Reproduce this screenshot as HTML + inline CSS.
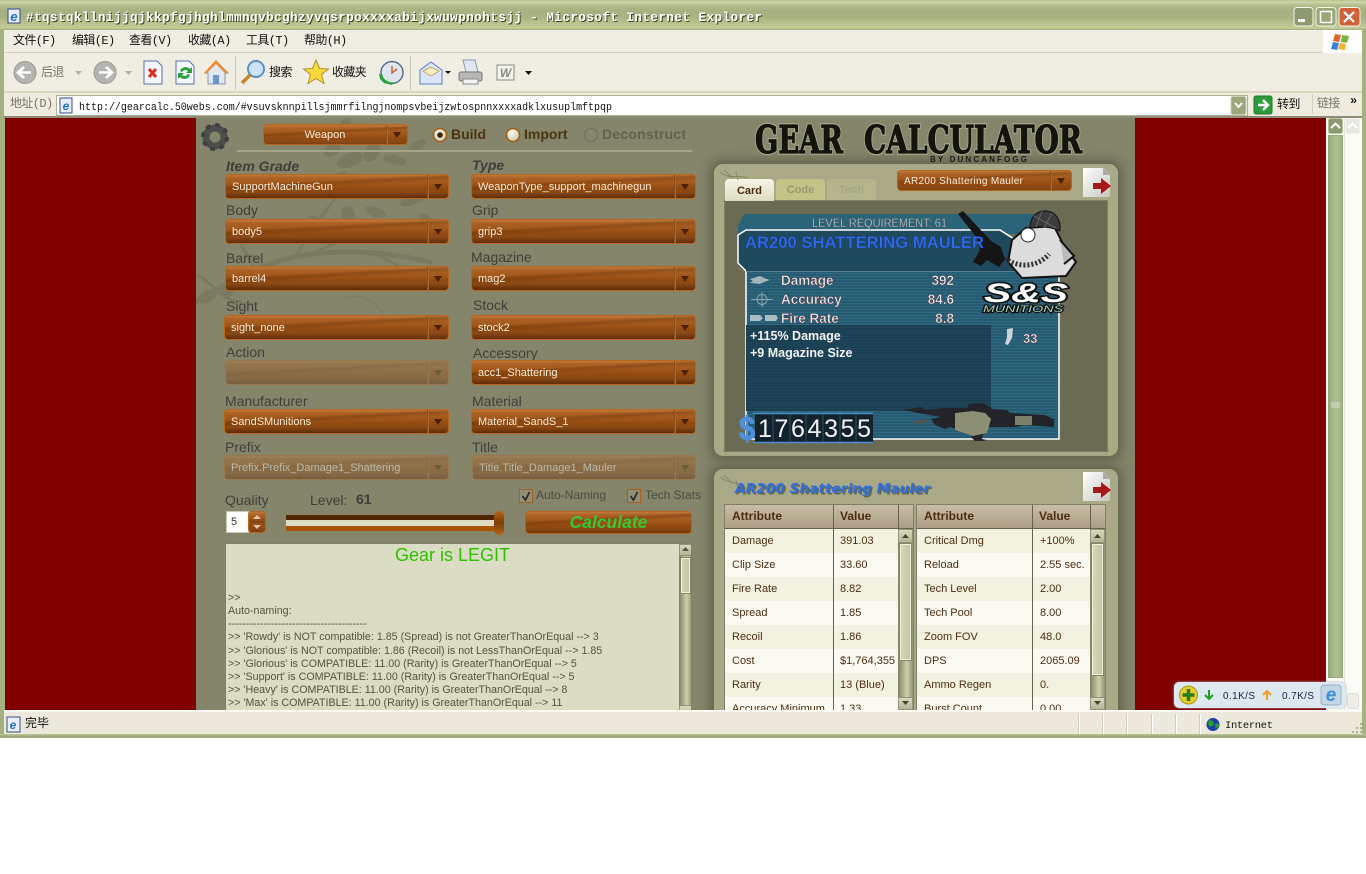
<!DOCTYPE html>
<html><head><meta charset="utf-8"><title>Gear Calculator</title>
<style>
html,body{margin:0;padding:0;background:#fff;width:1366px;height:874px;overflow:hidden}
div,span{position:absolute;box-sizing:border-box}
body{font-family:"Liberation Sans",Arial,sans-serif}
.cjk{font-family:"Liberation Mono","Noto Sans CJK SC",monospace;font-size:12px;color:#111;white-space:nowrap;line-height:14px;letter-spacing:-.6px}
.gr{color:#77776a}
.dd{height:25px;border-radius:4px;border:1px solid #b9651a;background:linear-gradient(177deg,rgba(0,0,0,0) 30%,rgba(80,36,0,.3) 38%,rgba(0,0,0,0) 50%),linear-gradient(#c07a3c 0,#ad6225 3px,#a4591c 8px,#91490f 14px,#8a4a16 17px,#6e360a 21px,#5e2c06 100%);color:#f6ecd6;font-size:11px;line-height:24px;padding-left:6px;white-space:nowrap;overflow:hidden}
.dd i{position:absolute;right:20px;top:0;bottom:0;width:1px;background:#8a4d1c;box-shadow:1px 0 0 #a9692f}
.dd b{position:absolute;right:6px;top:9px;width:0;height:0;border:4.5px solid transparent;border-top:6px solid #4a2200;border-bottom:0}
.off{opacity:.42}
.l{font-size:14px;line-height:16px;color:#3f3f3b;white-space:nowrap}
.row{left:0;width:100%;height:24px;font-size:11px;line-height:24px;color:#4d2c10;white-space:nowrap}
.row span{top:0}
.a{background:#f1f3e0}.b{background:#fafaf2}
.th{top:0;height:24px;font-size:12px;font-weight:bold;line-height:22px;color:#4d2c10;background:linear-gradient(#c9bda4,#ad9f86);border-bottom:1px solid #6a5f4a;padding-left:7px}
.log{left:2px;font-size:10.7px;line-height:12px;color:#57533f;white-space:nowrap}
.sb{background:linear-gradient(90deg,#7f8261,#cfd0ab 60%,#8f9270)}
.sbb{background:linear-gradient(#d8d9bc,#b4b596);border:1px solid #92937a}
.th2{background:linear-gradient(90deg,#d5d6b6,#c5c6a2);border:1px solid #eef0dc;box-shadow:0 0 0 1px #85866a}
.pn{background:#a9a987;border-radius:9px;box-shadow:0 0 10px 5px #66664f}
</style></head><body>

<!-- window chrome -->
<div style="left:0;top:0;width:1366px;height:738px;background:#a4b17e"></div>
<div style="left:0;top:0;width:1366px;height:30px;background:linear-gradient(#b7c38d 0,#cfd6ab 2px,#b4bf8e 5px,#a6b281 10px,#a7b382 17px,#bdc691 25px,#c4cc98 28px,#9dab78 30px)"></div>
<div style="left:4px;top:30px;width:1358px;height:23px;background:#f0eee3;border-bottom:1px solid #d8d5bf"></div>
<div style="left:4px;top:53px;width:1358px;height:40px;background:#f0eee2;border-bottom:2px solid #d9d6c0"></div>
<div style="left:4px;top:93px;width:1358px;height:23px;background:#efecdf"></div>
<div style="left:4px;top:116px;width:1358px;height:2px;background:#8c8c78"></div>
<div style="left:1323px;top:30px;width:39px;height:23px;background:#fff"></div>

<div class="cjk" style="left:13px;top:34px">文件(F)</div>
<div class="cjk" style="left:72px;top:34px">编辑(E)</div>
<div class="cjk" style="left:129px;top:34px">查看(V)</div>
<div class="cjk" style="left:188px;top:34px">收藏(A)</div>
<div class="cjk" style="left:246px;top:34px">工具(T)</div>
<div class="cjk" style="left:304px;top:34px">帮助(H)</div>
<div class="cjk gr" style="left:41px;top:66px">后退</div>
<div class="cjk" style="left:269px;top:66px">搜索</div>
<div class="cjk" style="left:332px;top:66px">收藏夹</div>
<div class="cjk gr" style="left:10px;top:97px">地址(D)</div>
<div class="cjk" style="left:1277px;top:98px">转到</div>
<div class="cjk gr" style="left:1317px;top:97px">链接</div>
<div class="cjk" style="left:1350px;top:94px;font-weight:bold">»</div>

<div style="left:56px;top:95px;width:1192px;height:21px;background:#fff;border:1px solid #a9b58a"></div>

<!-- content -->
<div style="left:5px;top:118px;width:1321px;height:592px;background:#800000"></div>
<div style="left:196px;top:118px;width:939px;height:592px;background:#85856b;overflow:hidden">
<svg style="position:absolute;left:0;top:0" width="510" height="592" viewBox="196 118 510 592">
<g fill="none" stroke="#7a7a61" stroke-linecap="round">
<path d="M190 305C225 285 255 265 295 257S380 250 430 262" stroke-width="5"/>
<path d="M295 257C310 232 330 205 352 175" stroke-width="3"/>
<path d="M320 250C360 232 395 222 430 226" stroke-width="2.5"/>
<path d="M255 268C245 252 240 240 230 232" stroke-width="2.5"/>
<path d="M372 252C398 265 415 278 428 272" stroke-width="2.5"/>
<path d="M198 275C212 282 220 300 240 302" stroke-width="3"/>
<path d="M340 300C360 290 380 300 395 335" stroke-width="1.500" opacity=".6"/>
</g>
<g fill="#7a7a61">
<ellipse cx="345" cy="128" rx="6" ry="10" transform="rotate(20 345 128)"/>
<ellipse cx="332" cy="150" rx="9" ry="6" transform="rotate(-30 332 150)"/>
<ellipse cx="350" cy="160" rx="14" ry="7" transform="rotate(-20 350 160)"/>
<ellipse cx="372" cy="152" rx="7" ry="11" transform="rotate(35 372 152)"/>
<ellipse cx="395" cy="160" rx="12" ry="5" transform="rotate(15 395 160)"/>
<ellipse cx="418" cy="145" rx="9" ry="4" transform="rotate(-25 418 145)"/>
<ellipse cx="340" cy="182" rx="8" ry="12" transform="rotate(30 340 182)"/>
<ellipse cx="366" cy="186" rx="13" ry="6" transform="rotate(-35 366 186)"/>
<ellipse cx="392" cy="185" rx="7" ry="10"/>
<ellipse cx="412" cy="200" rx="13" ry="5" transform="rotate(-20 412 200)"/>
<ellipse cx="375" cy="212" rx="11" ry="5" transform="rotate(20 375 212)"/>
<ellipse cx="348" cy="215" rx="7" ry="9" transform="rotate(-15 348 215)"/>
<ellipse cx="316" cy="222" rx="10" ry="5" transform="rotate(25 316 222)"/>
<ellipse cx="425" cy="218" rx="7" ry="4" transform="rotate(30 425 218)"/>
<ellipse cx="208" cy="296" rx="10" ry="6" transform="rotate(-30 208 296)"/>
<ellipse cx="228" cy="290" rx="6" ry="9" transform="rotate(20 228 290)"/>
</g></svg></div>
<div style="left:1326px;top:118px;width:36px;height:592px;background:#fcfcf6"></div>
<div style="left:1328px;top:135px;width:15px;height:543px;background:linear-gradient(90deg,#98ab7c,#b0bf96 50%,#a0b383);border:1px solid #93a876"></div>
<div style="left:1344px;top:118px;width:1px;height:592px;background:#e6e6d8"></div>

<!-- right panels -->
<div class="pn" style="left:714px;top:164px;width:404px;height:292px"></div>
<div style="left:724px;top:200px;width:384px;height:252px;background:#6b6b53;border:1px solid #7d7d65"></div>
<div class="pn" style="left:714px;top:469px;width:404px;height:250px"></div>
<div style="left:725px;top:179px;width:49px;height:22px;background:linear-gradient(#f6f6e8,#dedcc0);border-radius:4px 4px 0 0;text-align:center;font-size:11px;font-weight:bold;line-height:24px;color:#4a2e10">Card</div>
<div style="left:776px;top:179px;width:49px;height:21px;background:#c3c388;border-radius:4px 4px 0 0;text-align:center;font-size:11px;font-weight:bold;line-height:22px;color:#98986f">Code</div>
<div style="left:827px;top:179px;width:49px;height:21px;background:#b4b58a;border-radius:4px 4px 0 0;text-align:center;font-size:11px;font-weight:bold;line-height:22px;color:#a6a77f">Tech</div>

<!-- overlay art -->
<svg style="position:absolute;left:0;top:0" width="1366" height="874" viewBox="0 0 1366 874" font-family="Liberation Sans,Arial,sans-serif">
<defs>
<pattern id="st" width="3" height="3" patternUnits="userSpaceOnUse"><rect width="3" height="3" fill="#275b72"/><rect width="3" height="1" fill="#2e6780"/></pattern>
<pattern id="sd" width="3" height="3" patternUnits="userSpaceOnUse"><rect width="3" height="3" fill="#1c4053"/><rect width="3" height="1" fill="#204759"/></pattern>
<radialGradient id="rad" cx=".4" cy=".35" r=".7"><stop offset="0" stop-color="#fbfbf0"/><stop offset="1" stop-color="#c8c8ac"/></radialGradient>
<linearGradient id="doc" x1="0" y1="0" x2="1" y2="1"><stop offset="0" stop-color="#fff"/><stop offset="1" stop-color="#c4c8c0"/></linearGradient>
</defs>

<!-- title -->
<rect x="8" y="9" width="12" height="14" fill="#e8eefc" stroke="#3a4a8a"/>
<text x="14" y="21" text-anchor="middle" font-size="13" font-weight="bold" font-style="italic" fill="#1e6fd8">e</text>
<text x="26" y="21" textLength="736" lengthAdjust="spacing" font-family="Liberation Mono,monospace" font-weight="bold" font-size="12.5" fill="#3a4420" transform="translate(1 1)">#tqstqkllnijjqjkkpfgjhghlmmnqvbcghzyvqsrpoxxxxabijxwuwpnohtsjj - Microsoft Internet Explorer</text>
<text x="26" y="21" textLength="736" lengthAdjust="spacing" font-family="Liberation Mono,monospace" font-weight="bold" font-size="12.5" fill="#fff">#tqstqkllnijjqjkkpfgjhghlmmnqvbcghzyvqsrpoxxxxabijxwuwpnohtsjj - Microsoft Internet Explorer</text>
<rect x="1294" y="7.5" width="19" height="18.5" rx="3" fill="#8d9a70" stroke="#f2f4e4"/><rect x="1298" y="19" width="7" height="3" fill="#fff"/>
<rect x="1316" y="7.5" width="20" height="18.5" rx="3" fill="#98a67a" stroke="#f2f4e4"/><rect x="1320.5" y="11.5" width="11" height="11" fill="none" stroke="#fff" stroke-width="1.5"/>
<rect x="1339" y="7.5" width="21" height="18.5" rx="3" fill="#d0613a" stroke="#f2f4e4"/><path d="M1344 12l10 10M1354 12l-10 10" stroke="#fff" stroke-width="2.2"/>
<!-- flag -->
<path d="M1335 34l6 1-2 7-6-1z" fill="#e0672c"/><path d="M1342 35l7 1-2 7-6-1z" fill="#7cb23a"/><path d="M1333 42l6 1-2 7-6-1z" fill="#3b7fd9"/><path d="M1340 43l6 1-1 6-7-1z" fill="#efb72c"/>

<!-- toolbar -->
<circle cx="25" cy="72.5" r="11" fill="#b5b5b0" stroke="#9a9a96"/><path d="M31 72.5H19M24 67l-6 5.5 6 5.5" fill="none" stroke="#fff" stroke-width="2.6"/>
<path d="M75 71l7 0-3.5 4z" fill="#b0b0a8"/>
<circle cx="105" cy="72.5" r="11" fill="#b5b5b0" stroke="#9a9a96"/><path d="M99 72.5h12M106 67l6 5.5-6 5.5" fill="none" stroke="#fff" stroke-width="2.6"/>
<path d="M125 71l7 0-3.5 4z" fill="#b0b0a8"/>
<path d="M144 61h13l5 5v18h-18z" fill="#f4f7ff" stroke="#5a6fb0"/><path d="M149 69l7 8M156 69l-7 8" stroke="#e0301c" stroke-width="3"/>
<path d="M176 61h13l5 5v18h-18z" fill="#f4f7ff" stroke="#5a6fb0"/><path d="M180 71a6 6 0 0 1 10-2l2-2v6h-6l2-2a4 4 0 0 0-6 1z" fill="#28a038"/><path d="M190 75a6 6 0 0 1-10 2l-2 2v-6h6l-2 2a4 4 0 0 0 6-1z" fill="#28a038"/>
<path d="M205 73l11-12 12 12h-3v11h-17v-11z" fill="#dfe6f4" stroke="#8a98b8"/><path d="M204 73l12-13 12 13-2 1-10-10-10 10z" fill="#ee8a2c"/><rect x="213" y="75" width="6" height="9" fill="#6f94c8"/>
<rect x="235" y="56" width="1" height="34" fill="#c9c6b0"/>
<circle cx="256" cy="69" r="8" fill="#cfe4fa" stroke="#5c8fc8" stroke-width="2"/><path d="M250 75l-8 8" stroke="#c8862c" stroke-width="3.5"/>
<path d="M316 60l3.5 8.5 9 .5-7 5.5 2.5 9-8-5-8 5 2.5-9-7-5.5 9-.5z" fill="#fbd93a" stroke="#b0902c"/>
<circle cx="392" cy="72.5" r="11" fill="#dfe6ee" stroke="#5a7090" stroke-width="1.5"/><path d="M392 66v7l5-4" stroke="#d06030" stroke-width="1.5" fill="none"/><path d="M382 74a10 10 0 0 0 12 8l-2 3-8-2-4-4-1-5z" fill="#28a038"/>
<rect x="410" y="56" width="1" height="34" fill="#c9c6b0"/>
<path d="M420 70l11-8 11 8v14h-22z" fill="#dbe6fa" stroke="#5c7cc0"/><path d="M423 71l8-4 8 4-8 5z" fill="#fbeec6" stroke="#c8a860"/>
<path d="M445 71h6l-3 3z" fill="#111"/>
<path d="M463 60h12l3 12h-12z" fill="#dfe6f0" stroke="#8a98b0"/><rect x="459" y="72" width="23" height="9" rx="2" fill="#b8b8b4" stroke="#777"/><rect x="463" y="79" width="15" height="5" fill="#f4f4f4" stroke="#888"/>
<rect x="497" y="65" width="17" height="15" fill="#f4f4ee" stroke="#8a8a80"/><text x="505.5" y="77" text-anchor="middle" font-size="12" font-weight="bold" font-style="italic" fill="#8a8a86">W</text>
<path d="M525 71h7l-3.5 4z" fill="#111"/>
<!-- address -->
<rect x="60" y="98" width="12" height="15" fill="#e8eefc" stroke="#3a4a8a"/><text x="66" y="110" text-anchor="middle" font-size="12" font-weight="bold" font-style="italic" fill="#1e6fd8">e</text>
<text x="79" y="110" textLength="533" lengthAdjust="spacingAndGlyphs" font-family="Liberation Mono,monospace" font-size="11" fill="#111">http://gearcalc.50webs.com/#vsuvsknnpillsjmmrfilngjnompsvbeijzwtospnnxxxxadklxusuplmftpqp</text>
<rect x="1231" y="96.5" width="15" height="18" rx="2" fill="#9aa67c" stroke="#c8d0ac"/><path d="M1235 103l3.5 4 3.5-4" fill="none" stroke="#fff" stroke-width="2"/>
<rect x="1254" y="96" width="18" height="18" rx="2" fill="#2c9a3c" stroke="#1e7a2c"/><path d="M1258 105h9M1263 100l5 5-5 5" fill="none" stroke="#fff" stroke-width="2.4"/>
<rect x="1312" y="94" width="1" height="20" fill="#d5d2bc"/>

<!-- page scrollbars -->
<rect x="1328.5" y="118.5" width="14" height="15" rx="2" fill="#8c9a70" stroke="#b8c29c"/><path d="M1331 128l4.5-4.5 4.5 4.5" fill="none" stroke="#fff" stroke-width="2"/>
<rect x="1345.5" y="118.5" width="14" height="15" rx="2" fill="#e8e8e2" stroke="#f4f4ee"/><path d="M1348 128l4.5-4.5 4.5 4.5" fill="none" stroke="#fff" stroke-width="2"/>
<path d="M1331 403h9M1331 405h9M1331 407h9" stroke="#d8e2c4"/>
<rect x="1347.5" y="693.5" width="11" height="15" rx="2" fill="#eeeee8" stroke="#ddd"/>

<!-- gear -->
<circle cx="215" cy="137" r="9" fill="none" stroke="#4e4e4e" stroke-width="7"/>
<circle cx="215" cy="137" r="12" fill="none" stroke="#3e3e3e" stroke-width="4" stroke-dasharray="4.5 4.9"/>
<circle cx="215" cy="137" r="4" fill="#85856b"/>
<!-- radios -->
<circle cx="440" cy="135" r="6.5" fill="url(#rad)" stroke="#a55a12" stroke-width="1.5"/><circle cx="440" cy="135" r="2.8" fill="#3a2208"/>
<text x="451" y="139" font-size="14" font-weight="bold" fill="#4a3410">Build</text>
<circle cx="513" cy="135" r="6.5" fill="url(#rad)" stroke="#a55a12" stroke-width="1.5"/>
<text x="524" y="139" font-size="14" font-weight="bold" fill="#4a3410">Import</text>
<circle cx="591" cy="135" r="6.5" fill="#85856b" stroke="#74745c" stroke-width="1.5"/>
<text x="602" y="139" font-size="14" font-weight="bold" fill="#62624a" textLength="84">Deconstruct</text>
<rect x="237" y="150" width="455" height="2" fill="#a3a388"/>

<!-- logo -->
<g font-family="DejaVu Serif,Liberation Serif,serif" font-weight="bold" fill="#14140e" stroke="#a8a88c" stroke-width="3.5" paint-order="stroke">
<text x="755" y="153" font-size="38" textLength="88" lengthAdjust="spacingAndGlyphs">GEAR</text>
<text x="864" y="153" font-size="38" textLength="218" lengthAdjust="spacingAndGlyphs">CALCULATOR</text>
</g>
<g font-family="DejaVu Serif,Liberation Serif,serif" font-weight="bold" fill="#14140e" stroke="#14140e" stroke-width="1.2">
<text x="755" y="153" font-size="38" textLength="88" lengthAdjust="spacingAndGlyphs">GEAR</text>
<text x="864" y="153" font-size="38" textLength="218" lengthAdjust="spacingAndGlyphs">CALCULATOR</text>
</g>
<text x="930" y="162" font-size="8" font-weight="bold" textLength="97" lengthAdjust="spacing" fill="#1c1c14">BY DUNCANFOGG</text>

<!-- card -->
<path d="M738 226l6-12h296v20h-302z" fill="#2b6478"/>
<rect x="746" y="268" width="313" height="171" fill="url(#st)" stroke="#fff" stroke-width="1.5"/>
<path d="M738 235l8-5h254l22 14v27H746l-8-8z" fill="#1f4a5e" stroke="#fff" stroke-width="1.5"/>
<path d="M746 271.5h276v-2H746z" fill="#1f4a5e"/>
<rect x="746" y="325" width="245" height="86" fill="url(#sd)"/>
<g font-size="13.5" font-weight="bold" fill="#efe6e6" stroke="#4a1c24" stroke-width=".35">
<text x="781" y="285">Damage</text><text x="954" y="285" text-anchor="end">392</text>
<text x="781" y="304">Accuracy</text><text x="954" y="304" text-anchor="end">84.6</text>
<text x="781" y="323">Fire Rate</text><text x="954" y="323" text-anchor="end">8.8</text>
<text x="1023" y="343" font-size="13">33</text>
</g>
<g font-size="12.5" font-weight="bold" fill="#f2f2f2">
<text x="750" y="340">+115% Damage</text><text x="750" y="357">+9 Magazine Size</text>
</g>
<path d="M750 279l10-3 4 2 6 2-6 2-4 2-10-1 3-2z" fill="#a5b6bc"/>
<g fill="none" stroke="#8fa4ac"><circle cx="762" cy="299.5" r="5"/><path d="M751 299.5h22M762 292v15"/></g>
<path d="M750 315h10l3 3-3 3h-10zM765 315h11l2 3-2 3h-11z" fill="#a8bcc2"/>
<path d="M1007 329l6-1-1 10-4 7-3-1 2-7zM1010 330l3 0-2 9-3 5z" fill="#c8d4d8"/>
<!-- mascot -->
<path d="M1012 240l14-12 28-2 10 20 12 16-10 14-44 2-14-16z" fill="#dcdcdc" stroke="#111" stroke-width="2"/>
<path d="M1030 228c0-12 8-18 17-17 9 1 14 9 13 20-9-4-20-5-30-3z" fill="#3c3c3c" stroke="#111"/>
<path d="M1034 216l22 12M1042 211l-6 16M1052 213l-8 15" stroke="#666" fill="none"/>
<circle cx="1028" cy="235" r="7" fill="#fff" stroke="#222"/>
<path d="M1005 258c12 10 32 10 44-4" stroke="#333" stroke-width="5" stroke-dasharray="2 2" fill="none"/>
<path d="M958 214l5-3 28 30 10 6 4 12-6 8-12-7-6 6-8-4 7-12-3-12z" fill="#151515"/>
<path d="M1060 240l14 16-10 8" fill="#bbb" stroke="#111" stroke-width="2"/>
<text x="745" y="248" font-size="17" font-weight="bold" textLength="239" lengthAdjust="spacingAndGlyphs" fill="#2e6cf2" stroke="#1a2a70" stroke-width=".3">AR200 SHATTERING MAULER</text>
<text x="812" y="227" font-size="12" textLength="135" lengthAdjust="spacingAndGlyphs" fill="#c9cbd0" stroke="#2a2a2a" stroke-width=".2">LEVEL REQUIREMENT: 61</text>
<text x="984" y="302" font-size="27" font-weight="bold" font-style="italic" textLength="84" lengthAdjust="spacingAndGlyphs" fill="#fff" stroke="#111" stroke-width="3" paint-order="stroke">S&amp;S</text>
<text x="983" y="312" font-size="9" font-style="italic" textLength="80" lengthAdjust="spacingAndGlyphs" fill="#a8d4b8" stroke="#111" stroke-width="2" paint-order="stroke">MUNITIONS</text>
<!-- price -->
<rect x="755" y="414" width="118" height="28" fill="#12232e"/>
<path d="M753 413.5h120M753 442.5h120" stroke="#4e8ed2" stroke-width="1.5"/>
<text x="739" y="440" font-size="33" font-weight="bold" fill="#4f90d8" stroke="#4f90d8" textLength="16" lengthAdjust="spacingAndGlyphs">$</text>
<text x="758" y="437" font-size="25" fill="#f2f2f2" textLength="113" lengthAdjust="spacing">1764355</text>
<path d="M773 414v28M790 414v28M806 414v28M823 414v28M840 414v28M856 414v28" stroke="#31505f"/>
<!-- gun -->
<path d="M903 410l18-3 4 3 18-2 24 0 2-4 14-1 10 6 14 1 3 3 34 2 10 4v8l-30-2-8 2-28 0-4 4-2 8 5 1-4 1-8 0-4-4 1-8-14 0-8-2-5 2-10-4-4-6 10-2-22-4-22-4z" fill="#23242a"/>
<path d="M955 413l18-2 12 2 6 6-4 14-14 3-18-6z" fill="#8d8f74"/>
<rect x="1015" y="416" width="17" height="9" fill="#7e806a"/>
<path d="M913 421l14-1 3 2-14 2z" fill="#55564c"/>
<!-- export icons -->
<g><path d="M1083 168h20l7 7v22h-27z" fill="url(#doc)"/><path d="M1103 168l7 7h-7z" fill="#aaa"/><path d="M1093 183h8v-5l10 8-10 8v-5h-8z" fill="#a81818"/></g>
<g transform="translate(0 304)"><path d="M1083 168h20l7 7v22h-27z" fill="url(#doc)"/><path d="M1103 168l7 7h-7z" fill="#aaa"/><path d="M1093 183h8v-5l10 8-10 8v-5h-8z" fill="#a81818"/></g>
<path d="M720 172c10 8 15 2 28 6M724 170l8 8M736 172l2 8" fill="none" stroke="#85856a"/>
<path d="M720 477c10 8 15 2 28 13M724 475l8 8M736 480l2 8" fill="none" stroke="#85856a"/>
<text x="735" y="493" font-family="DejaVu Sans,sans-serif" font-size="13" font-weight="bold" font-style="italic" textLength="195" lengthAdjust="spacingAndGlyphs" fill="#55553f" opacity=".8" transform="translate(1.5 1.5)">AR200 Shattering Mauler</text>
<text x="735" y="493" font-family="DejaVu Sans,sans-serif" font-size="13" font-weight="bold" font-style="italic" textLength="195" lengthAdjust="spacingAndGlyphs" fill="#2f6fe0">AR200 Shattering Mauler</text>
</svg>

<!-- dropdowns -->
<div class="dd" style="left:263px;top:124px;width:145px;height:21px;line-height:21px;padding:0 21px 0 0;text-align:center;">Weapon<i></i><b style="top:7px"></b></div>
<div class="dd" style="left:897px;top:170px;width:175px;height:21px;line-height:21px;font-size:10px;letter-spacing:.3px">AR200 Shattering Mauler<i></i><b style="top:7px"></b></div>

<div class="l" style="left:226px;top:158px;font-weight:bold;font-style:italic">Item Grade</div>
<div class="dd" style="left:225px;top:174px;width:224px">SupportMachineGun<i></i><b></b></div>
<div class="l" style="left:472px;top:157px;font-weight:bold;font-style:italic">Type</div>
<div class="dd" style="left:471px;top:174px;width:225px">WeaponType_support_machinegun<i></i><b></b></div>
<div class="l" style="left:226px;top:202px">Body</div>
<div class="dd" style="left:225px;top:219px;width:224px">body5<i></i><b></b></div>
<div class="l" style="left:472px;top:202px">Grip</div>
<div class="dd" style="left:471px;top:219px;width:225px">grip3<i></i><b></b></div>
<div class="l" style="left:226px;top:250px">Barrel</div>
<div class="dd" style="left:225px;top:266px;width:224px">barrel4<i></i><b></b></div>
<div class="l" style="left:471px;top:249px">Magazine</div>
<div class="dd" style="left:471px;top:266px;width:225px">mag2<i></i><b></b></div>
<div class="l" style="left:226px;top:298px">Sight</div>
<div class="dd" style="left:224px;top:315px;width:225px">sight_none<i></i><b></b></div>
<div class="l" style="left:473px;top:297px">Stock</div>
<div class="dd" style="left:471px;top:315px;width:225px">stock2<i></i><b></b></div>
<div class="l" style="left:226px;top:344px">Action</div>
<div class="dd off" style="left:225px;top:360px;width:224px"><i></i><b></b></div>
<div class="l" style="left:473px;top:345px">Accessory</div>
<div class="dd" style="left:471px;top:360px;width:225px">acc1_Shattering<i></i><b></b></div>
<div class="l" style="left:225px;top:393px">Manufacturer</div>
<div class="dd" style="left:224px;top:409px;width:225px">SandSMunitions<i></i><b></b></div>
<div class="l" style="left:472px;top:393px">Material</div>
<div class="dd" style="left:471px;top:409px;width:225px">Material_SandS_1<i></i><b></b></div>
<div class="l" style="left:225px;top:439px">Prefix</div>
<div class="dd off" style="left:224px;top:455px;width:225px;color:#fff">Prefix.Prefix_Damage1_Shattering<i></i><b></b></div>
<div class="l" style="left:472px;top:439px">Title</div>
<div class="dd off" style="left:472px;top:455px;width:224px;color:#fff">Title.Title_Damage1_Mauler<i></i><b></b></div>

<div class="l" style="left:225px;top:492px">Quality</div>
<div class="l" style="left:310px;top:492px">Level:</div>
<div class="l" style="left:356px;top:491px;font-weight:bold">61</div>
<div style="left:226px;top:511px;width:23px;height:22px;background:#fff;border:1px solid #c8c8b0;font-size:11px;line-height:20px;padding-left:4px;color:#333">5</div>
<div class="dd" style="left:248px;top:511px;width:18px;height:22px"></div>
<svg style="position:absolute;left:248px;top:511px" width="18" height="22"><path d="M5 8l4-4 4 4z" fill="#d8c8a8"/><rect x="2" y="10.5" width="14" height="1" fill="#6a3206"/><path d="M5 14l4 4 4-4z" fill="#d8c8a8"/></svg>
<div style="left:286px;top:515px;width:212px;height:16px;background:linear-gradient(#4e2600 0,#4e2600 5px,#dedcc0 5px,#dedcc0 11px,#a85400 11px)"></div>
<div style="left:494px;top:511px;width:10px;height:24px;border-radius:5px;background:linear-gradient(#b46316,#7c3c08 50%,#b46316)"></div>
<div style="left:519px;top:489px;width:14px;height:14px;background:#8f8f76;border:1px solid #a5621f"></div>
<div style="left:627px;top:489px;width:14px;height:14px;background:#8f8f76;border:1px solid #a5621f"></div>
<svg style="position:absolute;left:519px;top:489px" width="125" height="14"><path d="M3.5 7l3 4 4-8" fill="none" stroke="#2a2a20" stroke-width="1.7"/><path d="M111.5 7l3 4 4-8" fill="none" stroke="#2a2a20" stroke-width="1.7"/></svg>
<div class="l" style="left:536px;top:487px;font-size:12px;color:#4b4b42">Auto-Naming</div>
<div class="l" style="left:645px;top:487px;font-size:12px;color:#4b4b42">Tech Stats</div>
<div class="dd" style="left:525px;top:511px;width:167px;height:23px;text-align:center;padding:0;color:#35c835;font-size:17.5px;font-weight:bold;font-style:italic;line-height:21px">Calculate</div>

<!-- log -->
<div style="left:225px;top:543px;width:467px;height:167px;background:#dadcc4;border:1px solid #80806a;border-bottom:0;overflow:hidden">
<div style="left:0;width:453px;top:1px;text-align:center;color:#2fc000;font-size:18px;line-height:20px">Gear is LEGIT</div>
<div class="log" style="top:48px">&gt;&gt;</div>
<div class="log" style="top:61px">Auto-naming:</div>
<div class="log" style="top:74px">---------------------------------------</div>
<div class="log" style="top:87px">&gt;&gt; 'Rowdy' is NOT compatible: 1.85 (Spread) is not GreaterThanOrEqual --&gt; 3</div>
<div class="log" style="top:101px">&gt;&gt; 'Glorious' is NOT compatible: 1.86 (Recoil) is not LessThanOrEqual --&gt; 1.85</div>
<div class="log" style="top:114px">&gt;&gt; 'Glorious' is COMPATIBLE: 11.00 (Rarity) is GreaterThanOrEqual --&gt; 5</div>
<div class="log" style="top:127px">&gt;&gt; 'Support' is COMPATIBLE: 11.00 (Rarity) is GreaterThanOrEqual --&gt; 5</div>
<div class="log" style="top:140px">&gt;&gt; 'Heavy' is COMPATIBLE: 11.00 (Rarity) is GreaterThanOrEqual --&gt; 8</div>
<div class="log" style="top:153px">&gt;&gt; 'Max' is COMPATIBLE: 11.00 (Rarity) is GreaterThanOrEqual --&gt; 11</div>
<div class="sb" style="left:453px;top:0;width:13px;height:166px"></div>
<div class="sbb" style="left:453px;top:0;width:13px;height:12px"></div>
<div class="th2" style="left:455px;top:14px;width:9px;height:35px"></div>
<div class="sbb" style="left:453px;top:161px;width:13px;height:12px"></div>
</div>
<svg style="position:absolute;left:679px;top:543px" width="13" height="12"><path d="M3 8l3.5-4 3.5 4z" fill="#55553f"/></svg>

<!-- table left -->
<div style="left:724px;top:504px;width:190px;height:206px;background:#7f7f68"></div>
<div style="left:725px;top:505px;width:188px;height:205px;overflow:hidden;background:#fafaf2">
<div class="th" style="left:0;width:108px">Attribute</div><div class="th" style="left:108px;width:65px">Value</div><div class="th" style="left:173px;width:15px"></div>
<div class="row a" style="top:24px"><span style="left:7px">Damage</span><span style="left:115px">391.03</span></div>
<div class="row b" style="top:48px"><span style="left:7px">Clip Size</span><span style="left:115px">33.60</span></div>
<div class="row a" style="top:72px"><span style="left:7px">Fire Rate</span><span style="left:115px">8.82</span></div>
<div class="row b" style="top:96px"><span style="left:7px">Spread</span><span style="left:115px">1.85</span></div>
<div class="row a" style="top:120px"><span style="left:7px">Recoil</span><span style="left:115px">1.86</span></div>
<div class="row b" style="top:144px"><span style="left:7px">Cost</span><span style="left:115px">$1,764,355</span></div>
<div class="row a" style="top:168px"><span style="left:7px">Rarity</span><span style="left:115px">13 (Blue)</span></div>
<div class="row b" style="top:192px"><span style="left:7px">Accuracy Minimum</span><span style="left:115px">1.33</span></div>
<div style="left:108px;top:0;width:1px;height:205px;background:#6a5f4a"></div>
<div style="left:173px;top:0;width:1px;height:24px;background:#6a5f4a"></div>
<div class="sb" style="left:173px;top:24px;width:15px;height:181px"></div>
<div class="sbb" style="left:173px;top:24px;width:15px;height:14px"></div>
<div class="th2" style="left:175px;top:39px;width:11px;height:116px"></div>
<div class="sbb" style="left:173px;top:192px;width:15px;height:13px"></div>
</div>
<!-- table right -->
<div style="left:916px;top:504px;width:190px;height:206px;background:#7f7f68"></div>
<div style="left:917px;top:505px;width:188px;height:205px;overflow:hidden;background:#fafaf2">
<div class="th" style="left:0;width:115px">Attribute</div><div class="th" style="left:115px;width:58px">Value</div><div class="th" style="left:173px;width:15px"></div>
<div class="row a" style="top:24px"><span style="left:7px">Critical Dmg</span><span style="left:123px">+100%</span></div>
<div class="row b" style="top:48px"><span style="left:7px">Reload</span><span style="left:123px">2.55 sec.</span></div>
<div class="row a" style="top:72px"><span style="left:7px">Tech Level</span><span style="left:123px">2.00</span></div>
<div class="row b" style="top:96px"><span style="left:7px">Tech Pool</span><span style="left:123px">8.00</span></div>
<div class="row a" style="top:120px"><span style="left:7px">Zoom FOV</span><span style="left:123px">48.0</span></div>
<div class="row b" style="top:144px"><span style="left:7px">DPS</span><span style="left:123px">2065.09</span></div>
<div class="row a" style="top:168px"><span style="left:7px">Ammo Regen</span><span style="left:123px">0.</span></div>
<div class="row b" style="top:192px"><span style="left:7px">Burst Count</span><span style="left:123px">0.00</span></div>
<div style="left:115px;top:0;width:1px;height:205px;background:#6a5f4a"></div>
<div style="left:173px;top:0;width:1px;height:24px;background:#6a5f4a"></div>
<div class="sb" style="left:173px;top:24px;width:15px;height:181px"></div>
<div class="sbb" style="left:173px;top:24px;width:15px;height:14px"></div>
<div class="th2" style="left:175px;top:39px;width:11px;height:131px"></div>
<div class="sbb" style="left:173px;top:192px;width:15px;height:13px"></div>
</div>
<svg style="position:absolute;left:898px;top:529px" width="208" height="181"><path d="M4 9l3.5-4 3.5 4zM196 9l3.5-4 3.5 4zM4 172l3.5 4 3.5-4zM196 172l3.5 4 3.5-4z" fill="#44442f"/></svg>

<!-- status -->
<div style="left:0;top:710px;width:1366px;height:28px;background:#a4b17e"></div>
<div style="left:4px;top:710px;width:1358px;height:2px;background:#fbfbf4"></div>
<div style="left:4px;top:712px;width:1358px;height:22px;background:#ece9dc"></div>
<div style="left:0;top:734px;width:1366px;height:3px;background:linear-gradient(#c3cc9a,#8a9a68)"></div>
<div class="cjk" style="left:25px;top:717px;letter-spacing:0">完毕</div>
<svg style="position:absolute;left:0;top:710px" width="1366" height="28">
<rect x="7" y="7" width="13" height="15" fill="#e8eefc" stroke="#3a4a8a"/><text x="13" y="19" text-anchor="middle" font-size="12" font-weight="bold" font-style="italic" fill="#1e6fd8">e</text>
<path d="M1079.5 4v20M1103.5 4v20M1127.5 4v20M1152.5 4v20M1176.5 4v20M1200.5 4v20" stroke="#fff" stroke-width="1"/>
<path d="M1078.5 4v20M1102.5 4v20M1126.5 4v20M1151.5 4v20M1175.5 4v20M1199.5 4v20" stroke="#cfccb8" stroke-width="1"/>
<circle cx="1213" cy="14.5" r="6.5" fill="#1c3fa8"/><path d="M1209 10l4 1 1 4-4 2-2-3zM1215 14l3-1 1 3-3 3z" fill="#2aa02a"/>
<text x="1225" y="18" font-family="Liberation Mono,monospace" font-size="10.5" fill="#111" textLength="48">Internet</text>
<path d="M1352 23h2v-2h-2zM1356 23h2v-2h-2zM1360 23h2v-2h-2zM1356 19h2v-2h-2zM1360 19h2v-2h-2zM1360 15h2v-2h-2z" fill="#b0ae98"/>
</svg>
<!-- net widget -->
<div style="left:1174px;top:682px;width:172px;height:26px;background:#dde8f0;border-radius:5px;box-shadow:0 0 2px #a8b4bc"></div>
<svg style="position:absolute;left:1174px;top:682px" width="172" height="26" font-family="Liberation Sans,Arial,sans-serif">
<circle cx="14.5" cy="13" r="9" fill="#e8cc2c" stroke="#9a9a20"/><path d="M14.5 7v12M8.5 13h12" stroke="#2a7a20" stroke-width="3.5"/>
<path d="M35 8v9M31 13l4 4 4-4" fill="none" stroke="#20a020" stroke-width="2"/>
<text x="49" y="17" font-size="10" fill="#20204a" textLength="32" lengthAdjust="spacing">0.1K/S</text>
<path d="M93 18v-9M89 13l4-4 4 4" fill="none" stroke="#f0a020" stroke-width="2"/>
<text x="108" y="17" font-size="10" fill="#20204a" textLength="32" lengthAdjust="spacing">0.7K/S</text>
<rect x="147" y="3" width="20" height="20" rx="3" fill="#c4d6e4" stroke="#9ab4c8"/>
<text x="157" y="19" text-anchor="middle" font-size="19" font-weight="bold" font-style="italic" fill="#3a8ee0">e</text>
</svg>
</body></html>
